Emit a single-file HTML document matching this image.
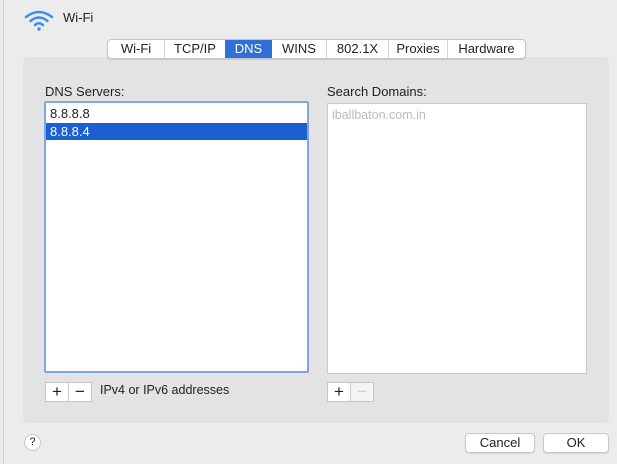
<!DOCTYPE html>
<html><head><style>
body{margin:0;width:617px;height:464px;background:#ececec;font-family:"Liberation Sans",sans-serif;font-size:12px;color:#222;position:relative;overflow:hidden}
.a{position:absolute}
.panel{left:23px;top:57px;width:586px;height:366px;background:#e3e3e3;border-radius:5px}
.tabs{left:107px;top:39px;height:18px;display:flex;border:1px solid #c4c4c4;border-radius:4px;background:#fff;overflow:hidden;box-shadow:0 1px 1px rgba(0,0,0,.12)}
.tabs div{height:18px;line-height:18px;text-align:center;border-left:1px solid #d4d4d4;font-size:13px}
.tabs div:first-child{border-left:none}
.list{background:#fff;border:1px solid #c9c9c9}
.btn{background:#fff;border:1px solid #c8c8c8;border-radius:4px;text-align:center;line-height:18px;font-size:13px;box-shadow:0 1px 1px rgba(0,0,0,.1)}
.pm{display:flex;border:1px solid #c6c6c6;background:#fff;height:18px}
.pm div{width:22px;text-align:center;line-height:17px;font-size:17px}
</style></head><body>
<div class="a" style="left:3px;top:0;width:1px;height:464px;background:#cfcfcf"></div>
<svg class="a" style="left:24px;top:8px" width="30" height="24" viewBox="0 0 30 24"><g fill="none" stroke="#3d8bf0" stroke-width="2.5" stroke-linecap="round"><path d="M2 9 Q15 -1 28 9"/><path d="M6.5 13 Q15 6 23.5 13"/><path d="M11 17 Q15 13.5 19 17"/></g><circle cx="15" cy="21" r="1.7" fill="#3d8bf0"/></svg>
<div class="a" style="left:63px;top:10px;font-size:13px">Wi-Fi</div>
<div class="a panel"></div>
<div class="a tabs">
<div style="width:56px">Wi-Fi</div><div style="width:60px">TCP/IP</div><div style="width:47px;background:#2f6fd8;color:#fff;border-left:none">DNS</div><div style="width:54px;border-left:none">WINS</div><div style="width:61px">802.1X</div><div style="width:58px">Proxies</div><div style="width:77px">Hardware</div>
</div>
<div class="a" style="left:45px;top:84px;font-size:13px">DNS Servers:</div>
<div class="a" style="left:327px;top:84px;font-size:13px">Search Domains:</div>
<div class="a list" style="left:44px;top:101px;width:261px;height:268px;border:2px solid #7ea6e3;border-radius:2px">
<div style="height:18px;line-height:18px;padding-left:4px;margin-top:2px;font-size:13px">8.8.8.8</div>
<div style="height:17px;line-height:17px;padding-left:4px;background:#1b5fd1;color:#fff;font-size:13px">8.8.8.4</div>
</div>
<div class="a list" style="left:327px;top:103px;width:258px;height:269px">
<div style="padding:4px 0 0 4px;color:#bbb;font-size:12.5px">iballbaton.com.in</div>
</div>
<div class="a pm" style="left:45px;top:382px"><div style="border-right:1px solid #ccc">+</div><div>−</div></div>
<div class="a" style="left:100px;top:383px;font-size:12.5px">IPv4 or IPv6 addresses</div>
<div class="a pm" style="left:327px;top:382px"><div style="border-right:1px solid #ccc">+</div><div style="color:#ccc;background:#f4f4f4">−</div></div>
<div class="a" style="left:24px;top:434px;width:15px;height:15px;border-radius:50%;background:#fff;border:1px solid #c6c6c6;text-align:center;line-height:15px;font-size:11px">?</div>
<div class="a btn" style="left:465px;top:433px;width:68px;height:18px">Cancel</div>
<div class="a btn" style="left:543px;top:433px;width:64px;height:18px">OK</div>
</body></html>
